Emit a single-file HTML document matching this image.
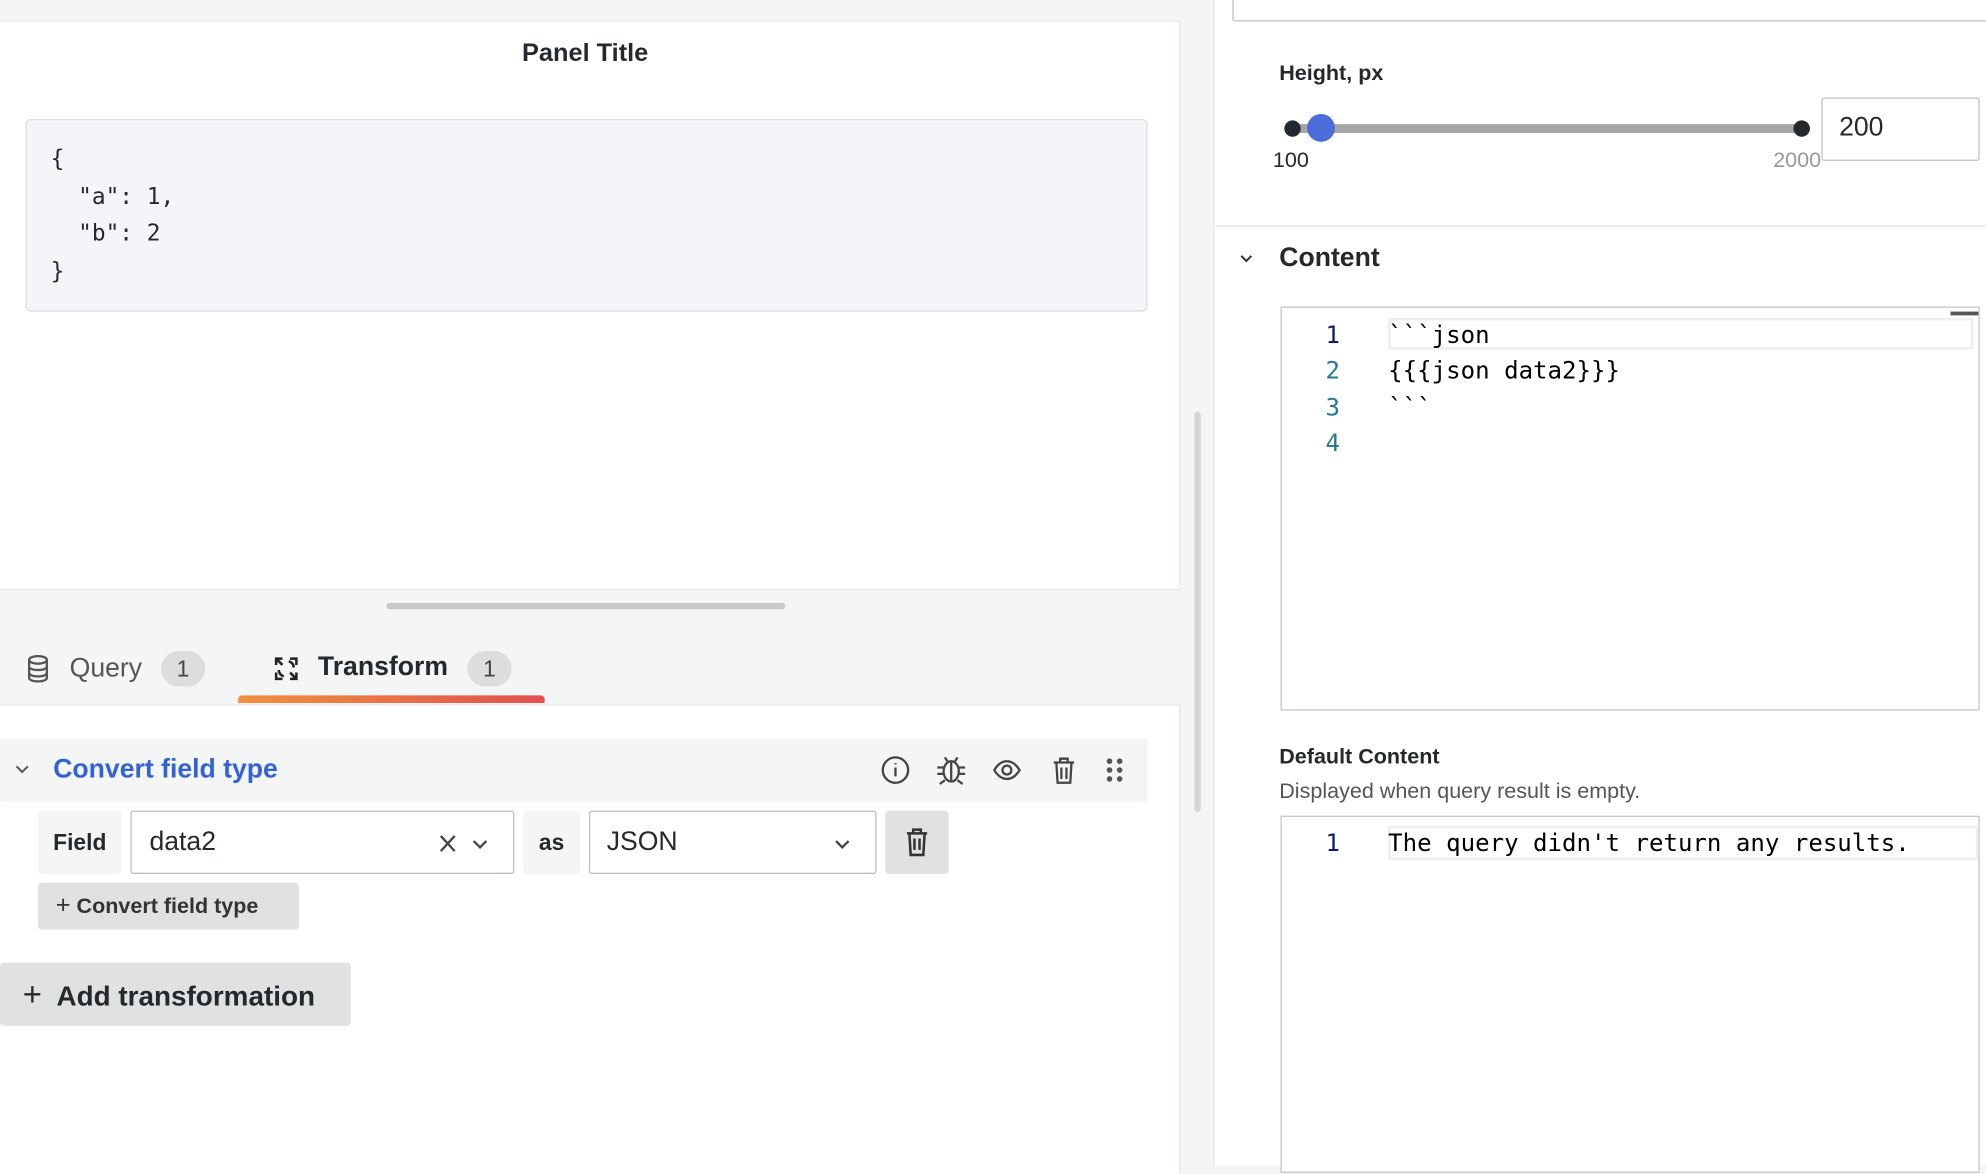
<!DOCTYPE html>
<html><head><style>
html,body{margin:0;padding:0;width:1986px;height:1152px;overflow:hidden;background:#f4f5f5}
#w{position:absolute;left:0;top:0;width:1568px;height:910px;transform:scale(1.26658);transform-origin:0 0;font-family:"Liberation Sans",sans-serif;color:#24292e}
.a{position:absolute}
.mono{font-family:"DejaVu Sans Mono","Liberation Mono",monospace}
.btn{background:#e0e1e1;border-radius:3px}
</style></head><body><div id="w">
<div class="a" style="left:0;top:16px;width:931px;height:448px;background:#fff;border:1px solid #e4e5e6;border-left:none"></div>
<div class="a" style="left:0;top:31px;width:924px;text-align:center;font-size:20px;font-weight:bold">Panel Title</div>
<div class="a" style="left:20px;top:94px;width:884px;height:150px;background:#f4f5f8;border:1px solid #dcdde0;border-radius:4px"></div>
<pre class="a mono" style="left:40px;top:111px;margin:0;font-size:18px;line-height:29.5px;color:#24292e">{
  "a": 1,
  "b": 2
}</pre>
<div class="a" style="left:305px;top:476px;width:315px;height:5px;background:#c8c9ca;border-radius:3px"></div>
<div class="a" style="left:943px;top:325px;width:5px;height:316px;background:#d4d5d6;border-radius:3px"></div>
<svg class="a" style="left:20px;top:516px" width="20" height="24" viewBox="0 0 20 24" fill="none" stroke="#555" stroke-width="1.8"><ellipse cx="10" cy="5" rx="7" ry="3"/><path d="M3 5v14c0 2 3 3 7 3s7-1 7-3V5M3 10c0 2 3 3 7 3s7-1 7-3M3 15c0 2 3 3 7 3s7-1 7-3"/></svg>
<div class="a" style="left:55px;top:516px;font-size:21px;color:#555">Query</div>
<div class="a" style="left:127px;top:514px;width:35px;height:28px;border-radius:14px;background:#dcdddf;text-align:center;line-height:28px;font-size:18px;color:#444">1</div>
<svg class="a" style="left:214px;top:516px" width="24" height="24" viewBox="0 0 24 24" fill="none" stroke="#222" stroke-width="2"><path d="M4 9V4h5M4 4l5 5M20 15v5h-5M20 20l-5-5M15 4h5v5M9 20H4v-5M6 13a6 6 0 0 0 4 5M18 11a6 6 0 0 0-4-5"/></svg>
<div class="a" style="left:251px;top:515px;font-size:21px;font-weight:bold">Transform</div>
<div class="a" style="left:369px;top:514px;width:35px;height:28px;border-radius:14px;background:#dcdddf;text-align:center;line-height:28px;font-size:18px;color:#444">1</div>
<div class="a" style="left:188px;top:549px;width:242px;height:6px;border-radius:3px 3px 0 0;background:linear-gradient(90deg,#f0913f,#e2504f)"></div>
<div class="a" style="left:0;top:556px;width:931px;height:370px;background:#fff;border-top:1px solid #e4e5e6;border-right:1px solid #e4e5e6"></div>
<div class="a" style="left:0;top:583px;width:906px;height:50px;background:#f4f5f5;border-radius:2px"></div>
<svg class="a" style="left:11px;top:602px" width="13" height="10" viewBox="0 0 13 10"><path d="M2 3l4.5 4.5L11 3" stroke="#555" stroke-width="1.5" fill="none"/></svg>
<div class="a" style="left:42px;top:596px;font-size:21px;color:#3361d8;font-weight:bold">Convert field type</div>
<svg class="a" style="left:695px;top:596px" width="200" height="26" viewBox="0 0 200 26" fill="none" stroke="#444" stroke-width="1.8">
<circle cx="12" cy="12" r="10"/><path d="M12 10v7M12 6.5v1"/>
<g transform="translate(56 0)"><ellipse cx="0" cy="13" rx="6" ry="8"/><path d="M0 5v16M-3 5l-2-3M3 5l2-3M-6 10h-5M6 10h5M-6 15h-5M6 15h5M-5 20l-4 3M5 20l4 3"/></g>
<g transform="translate(100 0)"><path d="M-10 12c3-5 6-7 10-7s7 2 10 7c-3 5-6 7-10 7s-7-2-10-7z"/><circle cx="0" cy="12" r="3.5"/></g>
<g transform="translate(145 0)"><path d="M-8 6h16M-3 6V3h6v3M-6 6l1 16h10l1-16M-2 10v9M2 10v9"/></g>
<g fill="#555" stroke="none"><circle cx="181" cy="5" r="2.2"/><circle cx="189" cy="5" r="2.2"/><circle cx="181" cy="12" r="2.2"/><circle cx="189" cy="12" r="2.2"/><circle cx="181" cy="19" r="2.2"/><circle cx="189" cy="19" r="2.2"/></g></svg>
<div class="a" style="left:30px;top:640px;width:66px;height:50px;background:#f4f5f5;border-radius:3px;font-size:18px;font-weight:bold;line-height:50px;text-align:center">Field</div>
<div class="a" style="left:103px;top:640px;width:301px;height:48px;border:1px solid #bfc0c1;border-radius:2px;background:#fff"></div>
<div class="a" style="left:118px;top:653px;font-size:21px">data2</div>
<svg class="a" style="left:345px;top:656px" width="45" height="20" viewBox="0 0 45 20" fill="none" stroke="#444" stroke-width="1.8"><path d="M3 4l11 12M14 4L3 16M29 8l5 5 5-5"/></svg>
<div class="a" style="left:413px;top:640px;width:45px;height:50px;background:#f4f5f5;border-radius:3px;font-size:18px;font-weight:bold;line-height:50px;text-align:center">as</div>
<div class="a" style="left:465px;top:640px;width:225px;height:48px;border:1px solid #bfc0c1;border-radius:2px;background:#fff"></div>
<div class="a" style="left:479px;top:653px;font-size:21px">JSON</div>
<svg class="a" style="left:655px;top:656px" width="20" height="20" viewBox="0 0 20 20" fill="none" stroke="#444" stroke-width="1.8"><path d="M5 8l5 5 5-5"/></svg>
<div class="a btn" style="left:699px;top:640px;width:50px;height:50px"></div>
<svg class="a" style="left:712px;top:652px" width="24" height="26" viewBox="0 0 24 26" fill="none" stroke="#333" stroke-width="2"><path d="M4 6h16M9 6V3h6v3M6 6l1 17h10l1-17M10 10v9M14 10v9"/></svg>
<div class="a btn" style="left:30px;top:697px;width:206px;height:37px;font-size:17px;font-weight:bold;line-height:37px;color:#333;white-space:nowrap"><span style="margin-left:14px;font-weight:normal;font-size:20px">+</span> Convert field type</div>
<div class="a btn" style="left:0;top:760px;width:277px;height:50px;font-size:22px;font-weight:bold;line-height:50px;color:#24292e;white-space:nowrap"><span style="margin-left:18px;font-weight:normal;font-size:26px">+</span>&nbsp; Add transformation</div>
<div class="a" style="left:958px;top:0;width:610px;height:920px;background:#fff;border-left:1px solid #e4e5e6"></div>
<div class="a" style="left:973px;top:-10px;width:600px;height:25px;border:1px solid #bfc0c1;border-radius:2px"></div>
<div class="a" style="left:1010px;top:48px;font-size:17px;font-weight:bold">Height, px</div>
<div class="a" style="left:1020px;top:98px;width:402px;height:7px;background:#a5a5a5;border-radius:3px"></div>
<div class="a" style="left:1014px;top:95px;width:13px;height:13px;border-radius:50%;background:#24292e"></div>
<div class="a" style="left:1416px;top:95px;width:13px;height:13px;border-radius:50%;background:#24292e"></div>
<div class="a" style="left:1032px;top:90px;width:22px;height:22px;border-radius:50%;background:#4a6ddb"></div>
<div class="a" style="left:1005px;top:117px;font-size:17px">100</div>
<div class="a" style="left:1400px;top:117px;font-size:17px;color:#999">2000</div>
<div class="a" style="left:1438px;top:77px;width:123px;height:48px;border:1px solid #bfc0c1;border-radius:2px;background:#fff"></div>
<div class="a" style="left:1452px;top:89px;font-size:21px">200</div>
<div class="a" style="left:960px;top:178px;width:608px;height:1px;background:#e4e5e6"></div>
<svg class="a" style="left:977px;top:199px" width="14" height="10" viewBox="0 0 14 10"><path d="M3 3l4 4 4-4" stroke="#333" stroke-width="1.6" fill="none"/></svg>
<div class="a" style="left:1010px;top:192px;font-size:21px;font-weight:bold">Content</div>
<div class="a" style="left:1011px;top:242px;width:550px;height:317px;border:1px solid #c4c5c6;background:#fff"></div>
<div class="a" style="left:1096px;top:251px;width:462px;height:25px;border:2px solid #eee;box-sizing:border-box"></div>
<div class="a" style="left:1540px;top:246px;width:22px;height:3px;background:#555"></div>
<div class="a mono" style="left:1040px;top:251px;font-size:19px;line-height:28.3px;color:#237893;text-align:right;width:18px"><span style="color:#0b216f">1</span><br>2<br>3<br>4</div>
<div class="a mono" style="left:1096px;top:251px;font-size:19px;line-height:28.3px;color:#000;white-space:pre">&#96;&#96;&#96;json<br>&#123;&#123;&#123;json data2&#125;&#125;&#125;<br>&#96;&#96;&#96;</div>
<div class="a" style="left:1010px;top:588px;font-size:17px;font-weight:bold">Default Content</div>
<div class="a" style="left:1010px;top:615px;font-size:17px;color:#555">Displayed when query result is empty.</div>
<div class="a" style="left:1011px;top:644px;width:550px;height:280px;border:1px solid #c4c5c6;background:#fff"></div>
<div class="a" style="left:1096px;top:652px;width:466px;height:27px;border:2px solid #eee;box-sizing:border-box"></div>
<div class="a mono" style="left:1040px;top:652px;font-size:19px;line-height:28px;color:#0b216f;width:18px;text-align:right">1</div>
<div class="a mono" style="left:1096px;top:652px;font-size:19px;line-height:28px;color:#000;white-space:pre">The query didn't return any results.</div>
</div></body></html>
